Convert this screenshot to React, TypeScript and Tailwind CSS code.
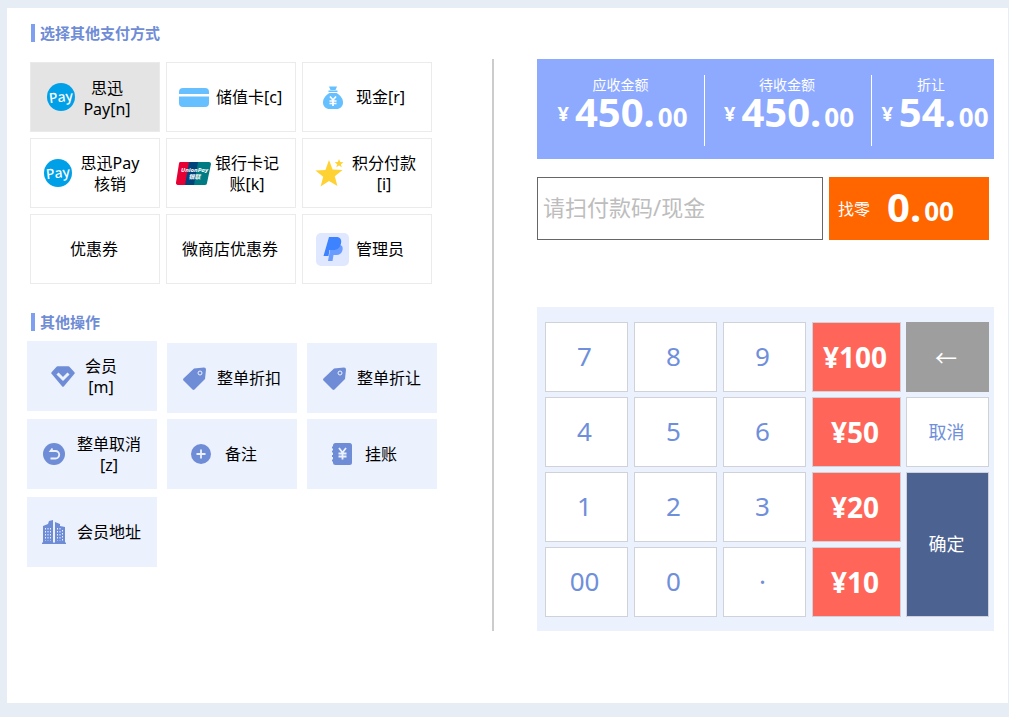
const font = "font-['Noto_Sans','Noto_Sans_CJK_SC',sans-serif]";

const PayIcon = () => (
  <div className="flex size-[28px] shrink-0 items-center justify-center rounded-full bg-[#00a0e9] text-white">
    <span className="-rotate-6 text-[14px] font-medium leading-none">Pay</span>
  </div>
);

const CardIcon = () => (
  <svg width="30" height="19" viewBox="0 0 30 19">
    <path d="M4 0h22a4 4 0 0 1 4 4v2H0V4a4 4 0 0 1 4-4z" fill="#66bfff" />
    <path d="M0 8.500h30V15a4 4 0 0 1-4 4H4a4 4 0 0 1-4-4z" fill="#66bfff" />
  </svg>
);

const BagIcon = () => (
  <svg width="20" height="23" viewBox="0 0 20 23">
    <path d="M6 0.500h8l-1.500 3.500h-5z" fill="#66bfff" />
    <rect x="5.500" y="4.500" width="9" height="1.500" fill="#66bfff" />
    <path d="M6.500 7h7C17 9 20 12.500 20 16.500c0 4-3 6.500-6.500 6.500h-7C3 23 0 20.500 0 16.500 0 12.500 3 9 6.500 7z" fill="#66bfff" />
    <path d="M7 10.500l3 3.500 3-3.500M6.500 15h7M6.500 17.500h7M10 14v6" stroke="#fff" strokeWidth="1.700" fill="none" />
  </svg>
);

const UnionPayIcon = () => (
  <div className="relative h-[23px] w-[35px] shrink-0 overflow-hidden">
    <svg width="35" height="23" viewBox="0 0 35 23" className="absolute left-0 top-0">
      <path d="M4 0h11L11 23H2a2 2 0 0 1-2-2.500L3 1.500A2 2 0 0 1 4 0z" fill="#e60033" />
      <path d="M13 0h11l-4 23H9z" fill="#00447c" />
      <path d="M22 0h11a2 2 0 0 1 2 2l-4 19a2 2 0 0 1-2 2H18z" fill="#007b84" />
    </svg>
    <div className="absolute left-[3px] top-[5px] w-[31px] text-center text-[6px] font-bold italic leading-[7px] text-white">
      <div className="whitespace-nowrap">UnionPay</div>
      <div>银联</div>
    </div>
  </div>
);

const StarIcon = () => (
  <svg width="29" height="29" viewBox="0 0 29 29">
    <path d="M14 1l3.600 9.500 10 .5-7.800 6.300 2.600 9.700L14 22.100 5.600 27.500l2.600-9.700L.4 11.500l10-.5z" fill="#ffd233" />
    <path d="M24 0l1.200 3 3.300.2-2.600 2 .9 3.100-2.800-1.700-2.700 1.700.9-3.100-2.600-2 3.200-.2z" fill="#ffd233" />
  </svg>
);

const AdminIcon = () => (
  <div className="flex size-[33px] shrink-0 items-center justify-center rounded-[5px] bg-[#dfe8ff]">
    <svg width="20" height="24" viewBox="0 0 20 24">
      <path d="M8 8h8.500c3 0 3.500 2.500 3 5-.7 3.500-3 5-6 5h-3l-1 6H5z" fill="#6a9cff" />
      <path d="M6 0h7.500C17 0 19 2.500 18 6.500 17 11 14 13 10.500 13H6.500l-1 6H0.500z" fill="#3d82ff" />
    </svg>
  </div>
);

const DiamondIcon = () => (
  <svg width="24" height="21" viewBox="0 0 24 21">
    <path d="M6.500 1.500h11l5 5.500L12 19.500 1.500 7z" fill="#6f8cd6" stroke="#6f8cd6" strokeWidth="2.500" strokeLinejoin="round" />
    <path d="M6.500 7.500l5.500 5.500 5.500-5.500" stroke="#ebf1fd" strokeWidth="3" fill="none" />
  </svg>
);

const TagIcon = () => (
  <svg width="23" height="23" viewBox="0 0 23 23">
    <path d="M11 1.500L21 0.500a2 2 0 0 1 2 2L22 12 11.500 22.500a1.500 1.500 0 0 1-2 0L.5 13.500a1.500 1.500 0 0 1 0-2z" fill="#6f8cd6" />
    <circle cx="17" cy="6" r="2" fill="none" stroke="#ebf1fd" strokeWidth="1" />
  </svg>
);

const UndoIcon = () => (
  <svg width="22" height="22" viewBox="0 0 22 22">
    <circle cx="11" cy="11" r="11" fill="#6f8cd6" />
    <path d="M9.500 5.500L7.500 8h5a3.700 3.700 0 0 1 0 7.500H7.500" stroke="#ebf1fd" strokeWidth="1.800" fill="none" />
  </svg>
);

const PlusIcon = () => (
  <svg width="20" height="20" viewBox="0 0 20 20">
    <circle cx="10" cy="10" r="10" fill="#6f8cd6" />
    <path d="M10 5.500v9M5.500 10h9" stroke="#ebf1fd" strokeWidth="1.800" />
  </svg>
);

const LedgerIcon = () => (
  <svg width="20" height="22" viewBox="0 0 20 22">
    <rect x="1" y="0" width="19" height="22" rx="2.500" fill="#6f8cd6" />
    <path d="M0 4.500h2.500M0 8.500h2.500M0 13h2.500M0 17.500h2.500" stroke="#6f8cd6" strokeWidth="2" />
    <path d="M7 5l3.500 4.500L14 5M6.500 10.500h8M6.500 13.500h8M10.500 9.500v7" stroke="#ebf1fd" strokeWidth="1.800" fill="none" />
  </svg>
);

const BuildingIcon = () => (
  <svg width="24" height="24" viewBox="0 0 24 24">
    <path d="M1 6l5-2 1-3 4-1v23H1zM13 2l5 2v2l5 1v16H13z" fill="#6f8cd6" />
    <rect x="0" y="22.500" width="24" height="1.500" fill="#6f8cd6" />
    <path d="M3.500 8v12.500M6 8v12.500M8.500 8v12.500M15.500 8v12.500M18 8v12.500M20.500 10v10.500" stroke="#ebf1fd" strokeWidth="1" strokeDasharray="1.500 1.500" />
  </svg>
);

const SectionTitle = ({ text }: { text: string }) => (
  <div className="ml-px h-[18px] border-l-4 border-[#7f9ff0] pl-[5px] text-[15px] font-bold leading-[18px] text-[#6f8cd6]">
    {text}
  </div>
);

// 支付方式
const payments = [
  { box: "pl-[16px]", icon: <PayIcon />, textBox: "w-[64px] pt-[3px] text-center", text: "思迅Pay[n]", active: true },
  { box: "pl-[12px] gap-[7px]", icon: <CardIcon />, textBox: "", text: "储值卡[c]" },
  { box: "pl-[20px] gap-[13px]", icon: <BagIcon />, textBox: "", text: "现金[r]" },
  { box: "pl-[13px] gap-[8px]", icon: <PayIcon />, textBox: "w-[60px] pt-[2px] text-center", text: "思迅Pay核销" },
  { box: "pl-[9px] gap-[4px]", icon: <UnionPayIcon />, textBox: "w-[64px] pt-[2px] text-center", text: "银行卡记账[k]" },
  { box: "pl-[12px] gap-[8px]", icon: <StarIcon />, textBox: "w-[64px] pt-[2px] text-center", text: "积分付款[i]" },
  { box: "justify-center pr-[2px]", icon: null, textBox: "", text: "优惠券" },
  { box: "justify-center pr-[2px]", icon: null, textBox: "", text: "微商店优惠券" },
  { box: "pl-[13px] gap-[7px]", icon: <AdminIcon />, textBox: "", text: "管理员" },
];

const PayCard = ({ item }: { item: (typeof payments)[number] }) => (
  <div
    className={`flex h-[70px] items-center border text-[16px] leading-[21px] text-black ${item.box} ${
      item.active ? "border-[#eaeaea] bg-[#e4e4e4]" : "border-[#ebebeb] bg-white"
    }`}
  >
    {item.icon}
    <div className={item.textBox}>{item.text}</div>
  </div>
);

const OpCard = ({
  box,
  icon,
  text,
  textBox = "",
  extra = "",
}: {
  box: string;
  icon: React.ReactNode;
  text: string;
  textBox?: string;
  extra?: string;
}) => (
  <div className={`flex h-[70px] w-[130px] items-center bg-[#ebf1fd] text-[16px] leading-[21px] text-black ${box} ${extra}`}>
    {icon}
    <div className={textBox}>{text}</div>
  </div>
);

const Money = ({
  label,
  big,
  cents,
  box,
  labelBox,
  amountBox,
}: {
  label: string;
  big: string;
  cents: string;
  box: string;
  labelBox: string;
  amountBox: string;
}) => (
  <div className={`flex h-[71px] flex-col items-center ${box}`}>
    <div className={`text-[14px] leading-[20px] text-white ${labelBox}`}>{label}</div>
    <div className={`-mt-[2px] flex items-baseline font-bold leading-[38px] text-white ${amountBox}`}>
      <span className="relative top-[-6px] mr-[6px] text-[20px]">¥</span>
      <span className="text-[40px]">{big}.</span>
      <span className="ml-[3px] text-[26px]">{cents}</span>
    </div>
  </div>
);

const keyBase = "flex items-center justify-center border border-[#cfd2d8]";
const digitKey = `${keyBase} h-[70px] w-[83px] bg-white pb-px pr-[4px] text-[26px] text-[#6f8fdb]`;
const cashKey = `${keyBase} h-[70px] w-[89px] bg-[#ff6659] pb-px pr-[3px] text-[28px] font-bold text-white`;

const KeyRow = ({ keys, cash }: { keys: string[]; cash: string }) => (
  <div className="flex">
    <div className="flex gap-[6px]">
      {keys.map((k) => (
        <div key={k} className={digitKey}>
          {k}
        </div>
      ))}
    </div>
    <div className={`${cashKey} ml-[6px]`}>{cash}</div>
  </div>
);

export default function App() {
  return (
    <div className={`h-[717px] w-[1009px] overflow-hidden bg-[#e6edf5] pb-[14px] pl-[7px] pr-px pt-[8px] ${font}`}>
      <div className="flex h-[695px] bg-white">
        {/* kiri */}
        <div className="w-[485px] pl-[23px] pt-[16px]">
          <SectionTitle text="选择其他支付方式" />
          <div className="mt-[20px] grid w-[402px] grid-cols-[130px_130px_130px] gap-[6px]">
            {payments.map((item) => (
              <PayCard key={item.text} item={item} />
            ))}
          </div>

          <div className="mt-[29px]">
            <SectionTitle text="其他操作" />
          </div>

          <div className="ml-[-3px] mt-[10px] flex flex-col">
            <div className="flex gap-[10px]">
              <OpCard box="pl-[24px] gap-[10px]" icon={<DiamondIcon />} text="会员[m]" textBox="w-[32px] pt-[2px] text-center" />
              <OpCard box="pl-[16px] gap-[11px]" extra="mt-[2px]" icon={<TagIcon />} text="整单折扣" />
              <OpCard box="pl-[16px] gap-[11px]" extra="mt-[2px]" icon={<TagIcon />} text="整单折让" />
            </div>
            <div className="mt-[6px] flex gap-[10px]">
              <OpCard box="pl-[16px] gap-[12px]" icon={<UndoIcon />} text="整单取消[z]" textBox="w-[64px] pt-[2px] text-center" />
              <OpCard box="pl-[24px] gap-[14px]" icon={<PlusIcon />} text="备注" />
              <OpCard box="pl-[25px] gap-[13px]" icon={<LedgerIcon />} text="挂账" />
            </div>
            <div className="mt-[8px] flex gap-[10px]">
              <OpCard box="pl-[15px] gap-[11px]" icon={<BuildingIcon />} text="会员地址" />
            </div>
          </div>
        </div>

        {/* pemisah */}
        <div className="mt-[51px] h-[572px] w-[2px] bg-[#cccccc]" />

        {/* kanan */}
        <div className="ml-[43px] w-[457px] pt-[51px]">
          <div className="flex h-[100px] items-center bg-[#8eaaff] pt-[2px]">
            <Money label="应收金额" big="450" cents="00" box="w-[168px] border-r border-white" labelBox="" amountBox="ml-[4px]" />
            <Money label="待收金额" big="450" cents="00" box="w-[167px] border-r border-white" labelBox="mr-[2px]" amountBox="ml-[2px]" />
            <Money label="折让" big="54" cents="00" box="w-[122px]" labelBox="mr-[4px]" amountBox="ml-[4px]" />
          </div>

          <div className="mt-[18px] flex gap-[6px]">
            <input
              className="h-[63px] w-[286px] border border-[#666666] bg-white px-[5px] pb-[4px] text-[22px] outline-none placeholder:text-[#bdbdbd]"
              placeholder="请扫付款码/现金"
            />
            <div className="flex h-[63px] w-[160px] items-center bg-[#ff6600] pl-[9px] text-white">
              <span className="text-[16px]">找零</span>
              <span className="mb-[4px] ml-[17px] text-[40px] font-bold leading-none">0.</span>
              <span className="ml-[3px] mt-[4px] text-[26px] font-bold leading-none">00</span>
            </div>
          </div>

          <div className="mt-[67px] h-[324px] bg-[#ebf1fd] pl-[8px] pt-[15px]">
            <div className="flex">
              <div className="flex flex-col gap-[5px]">
                <KeyRow keys={["7", "8", "9"]} cash="¥100" />
                <KeyRow keys={["4", "5", "6"]} cash="¥50" />
                <KeyRow keys={["1", "2", "3"]} cash="¥20" />
                <KeyRow keys={["00", "0", "·"]} cash="¥10" />
              </div>
              <div className="ml-[5px] flex w-[83px] flex-col gap-[5px]">
                <div className="flex h-[70px] items-center justify-center bg-[#9e9e9e] pr-[3px] text-[22px] text-white">←</div>
                <div className={`${keyBase} h-[70px] bg-white pr-[2px] text-[18px] text-[#6f8fdb]`}>取消</div>
                <div className={`${keyBase} h-[145px] bg-[#4c6291] pr-[2px] text-[18px] text-white`}>确定</div>
              </div>
            </div>
          </div>
        </div>
      </div>
    </div>
  );
}
